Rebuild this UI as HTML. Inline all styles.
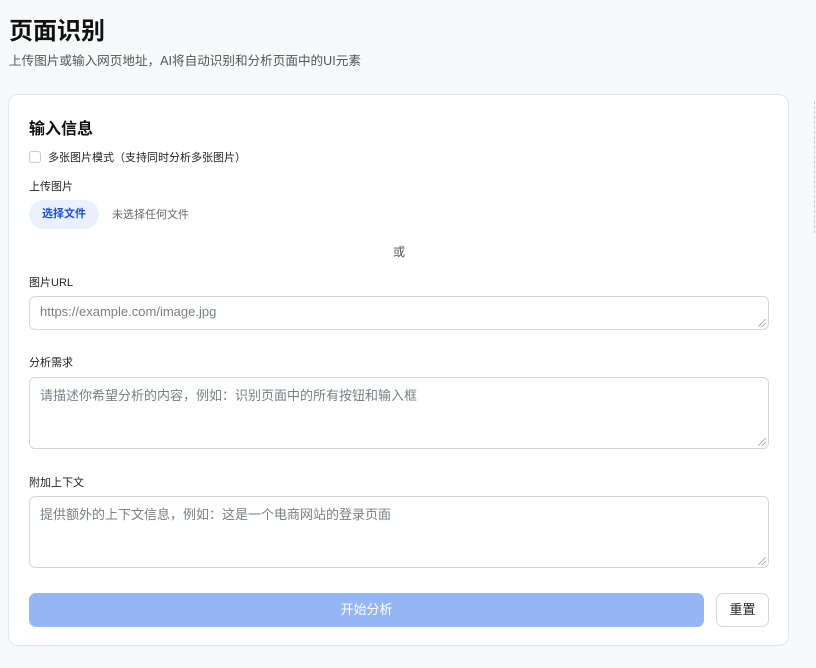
<!DOCTYPE html>
<html><head><meta charset="utf-8"><style>
*{box-sizing:border-box;margin:0;padding:0}
body{width:816px;height:668px;background:#f8f9fb;font-family:"Liberation Sans","Noto Sans CJK SC",sans-serif;color:#1f2328;position:relative;overflow:hidden}
.abs{position:absolute}
h1{position:absolute;left:9px;top:11px;font-size:24px;font-weight:700;color:#111}
.sub{left:9px;top:50px;font-size:12.6px;color:#555}
.card{left:8px;top:94px;width:781px;height:552px;background:#fff;border:1px solid #e3e5e8;border-radius:10px}
.dash{left:814px;top:101px;height:132px;border-left:1px dashed #ccc}
.lbl{font-size:11px;color:#222}
.box{border:1px solid #d4d7dc;border-radius:6px;background:#fff;font-size:13px;color:#7a7f87;padding:7px 10px}
.rz{position:absolute;right:2px;bottom:2px;width:8px;height:8px;background:linear-gradient(135deg,transparent 45%,#999 45%,#999 52%,transparent 52%,transparent 70%,#999 70%,#999 77%,transparent 77%)}
</style></head><body>
<h1>页面识别</h1>
<div class="abs sub">上传图片或输入网页地址，AI将自动识别和分析页面中的UI元素</div>
<div class="abs dash"></div>
<div class="abs card"></div>
<div class="abs" style="left:29px;top:115px;font-size:16px;font-weight:700;color:#111">输入信息</div>
<div class="abs" style="left:29px;top:151px;width:12px;height:12px;border:1px solid #c8ccd1;border-radius:3px"></div>
<div class="abs lbl" style="left:48px;top:149px">多张图片模式（支持同时分析多张图片）</div>
<div class="abs lbl" style="left:29px;top:178px">上传图片</div>
<div class="abs" style="left:29px;top:200px;width:70px;height:29px;border-radius:15px;background:#eaf1fd;color:#1d4ed8;font-size:11px;font-weight:700;text-align:center;line-height:29px">选择文件</div>
<div class="abs" style="left:112px;top:206px;font-size:11px;color:#666">未选择任何文件</div>
<div class="abs" style="left:393px;top:243px;font-size:12px;color:#555">或</div>
<div class="abs lbl" style="left:29px;top:274px">图片URL</div>
<div class="abs box" style="left:29px;top:296px;width:740px;height:34px">https://example.com/image.jpg<div class="rz"></div></div>
<div class="abs lbl" style="left:29px;top:354px">分析需求</div>
<div class="abs box" style="left:29px;top:377px;width:740px;height:72px">请描述你希望分析的内容，例如：识别页面中的所有按钮和输入框<div class="rz"></div></div>
<div class="abs lbl" style="left:29px;top:474px">附加上下文</div>
<div class="abs box" style="left:29px;top:496px;width:740px;height:72px">提供额外的上下文信息，例如：这是一个电商网站的登录页面<div class="rz"></div></div>
<div class="abs" style="left:29px;top:593px;width:675px;height:34px;border-radius:7px;background:#96b5f5;color:#fff;font-size:13px;text-align:center;line-height:34px">开始分析</div>
<div class="abs" style="left:716px;top:593px;width:53px;height:34px;border-radius:7px;border:1px solid #d4d7dc;background:#fff;font-size:13px;text-align:center;line-height:32px;color:#222">重置</div>
</body></html>
